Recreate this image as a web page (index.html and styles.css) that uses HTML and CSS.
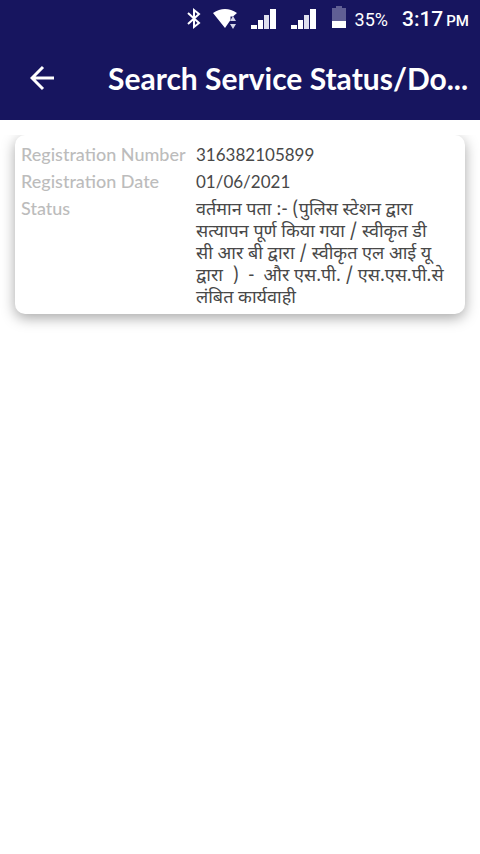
FILE: index.html
```
<!DOCTYPE html>
<html lang="en">
<head>
    <meta charset="UTF-8">
    <meta name="viewport" content="width=device-width, initial-scale=1.0">
    <title>Search Service Status</title>
    <link rel="stylesheet" href="styles.css">
</head>
<body>
    <header class="header">
        <div class="status-bar">
            <svg class="bluetooth" width="16" height="24" viewBox="0 0 16 24" fill="none" stroke="#fff" stroke-width="2">
                <path d="M3 6l11 10-5 4V3l5 4L3 17"/>
            </svg>
            <svg class="wifi" width="26" height="22" viewBox="0 0 26 22">
                <path d="M2 5Q14-3 26 5L22 8.500H19.500V12L14 20z" fill="#fff"/>
                <path d="M19 13L22 8l3 5zM19 16h6L22 21z" fill="#d5d5e8"/>
            </svg>
            <svg class="signal" width="26" height="20" viewBox="0 0 26 20" fill="#fff">
                <path d="M0 16h6v4H0zM7 11h5v9H7zM19 0h6v20h-6z"/>
                <path d="M13 6h5v14h-5z" fill="#e0e0ee"/>
            </svg>
            <svg class="signal" width="26" height="20" viewBox="0 0 26 20" fill="#fff">
                <path d="M0 16h6v4H0zM7 11h5v9H7zM19 0h6v20h-6z"/>
                <path d="M13 6h5v14h-5z" fill="#e0e0ee"/>
            </svg>
            <svg class="battery" width="14" height="22" viewBox="0 0 14 22">
                <path d="M4 0h6v2h4v13H0V2h4z" fill="#605f94"/>
                <path d="M0 15h14v7H0z" fill="#fff"/>
            </svg>
            <span class="percent">35%</span>
            <span class="time">3:17</span>
            <span class="ampm">PM</span>
        </div>
        <div class="toolbar">
            <button type="button" class="back" aria-label="Back">
                <svg width="26" height="26" viewBox="0 0 26 26" fill="none" stroke="#fff" stroke-width="3">
                    <path d="M24 13H2M13 2L2 13l11 11"/>
                </svg>
            </button>
            <h1>Search Service Status/Do...</h1>
        </div>
    </header>

    <main class="content">
        <dl class="card">
            <dt>Registration Number</dt>
            <dd>316382105899</dd>
            <dt>Registration Date</dt>
            <dd>01/06/2021</dd>
            <dt>Status</dt>
            <dd class="status-text" lang="hi">वर्तमान पता :- (पुलिस स्टेशन द्वारा सत्यापन पूर्ण किया गया / स्वीकृत डी
सी आर बी द्वारा / स्वीकृत एल आई यू द्वारा  )  -  और एस.पी. / एस.एस.पी.से लंबित कार्यवाही</dd>
        </dl>
    </main>
</body>
</html>
```

FILE: styles.css
```
body {
  margin: 0;
  font-family: Lato, "Noto Sans", sans-serif;
  background: #fff;
}

.header {
  padding-bottom: 2px;
  background: #17155f;
  color: #fff;
}

.status-bar {
  display: flex;
  justify-content: flex-end;
  align-items: center;
  height: 38px;
  padding-right: 11px;
  font-family: Roboto, sans-serif;
}

.wifi {
  margin-left: 10px;
}

.signal {
  margin-left: 14px;
}

.battery {
  margin-left: 15px;
  margin-bottom: 4px;
}

.percent {
  margin-left: 9px;
  font-size: 18px;
}

.time {
  margin-left: 14px;
  font-size: 21px;
  font-weight: 500;
}

.ampm {
  margin-left: 3px;
  margin-top: 4px;
  font-size: 15px;
  font-weight: 500;
}

.toolbar {
  display: flex;
  align-items: center;
  gap: 52px;
  height: 80px;
  padding: 0 8px 0 30px;
}

.back {
  display: flex;
  padding: 0;
  border: none;
  background: none;
  cursor: pointer;
}

h1 {
  margin: 0;
  min-width: 0;
  overflow: hidden;
  text-overflow: ellipsis;
  white-space: nowrap;
  font-size: 30px;
  font-weight: bold;
}

/* the list area cuts the card's shadow off at its top edge */
.content {
  margin-top: 15px;
  padding: 0 15px 30px;
  overflow: hidden;
}

.card {
  display: grid;
  grid-template-columns: 165px 1fr;
  align-items: baseline;
  gap: 4px 10px;
  margin: 0;
  padding: 8px 14px 4px 6px;
  border-radius: 10px;
  background: #fff;
  box-shadow: 0 4px 14px rgba(0, 0, 0, 0.35);
  font-size: 18px;
  line-height: 22px;
}

dt {
  color: #bcbcbc;
  font-weight: 500;
  white-space: nowrap;
}

dd {
  margin: 0;
  color: #484848;
  font-size: 17px;
}

.status-text {
  font-family: "Noto Sans Devanagari", "Noto Sans", sans-serif;
  font-size: 18px;
  white-space: pre-wrap;
}
```
